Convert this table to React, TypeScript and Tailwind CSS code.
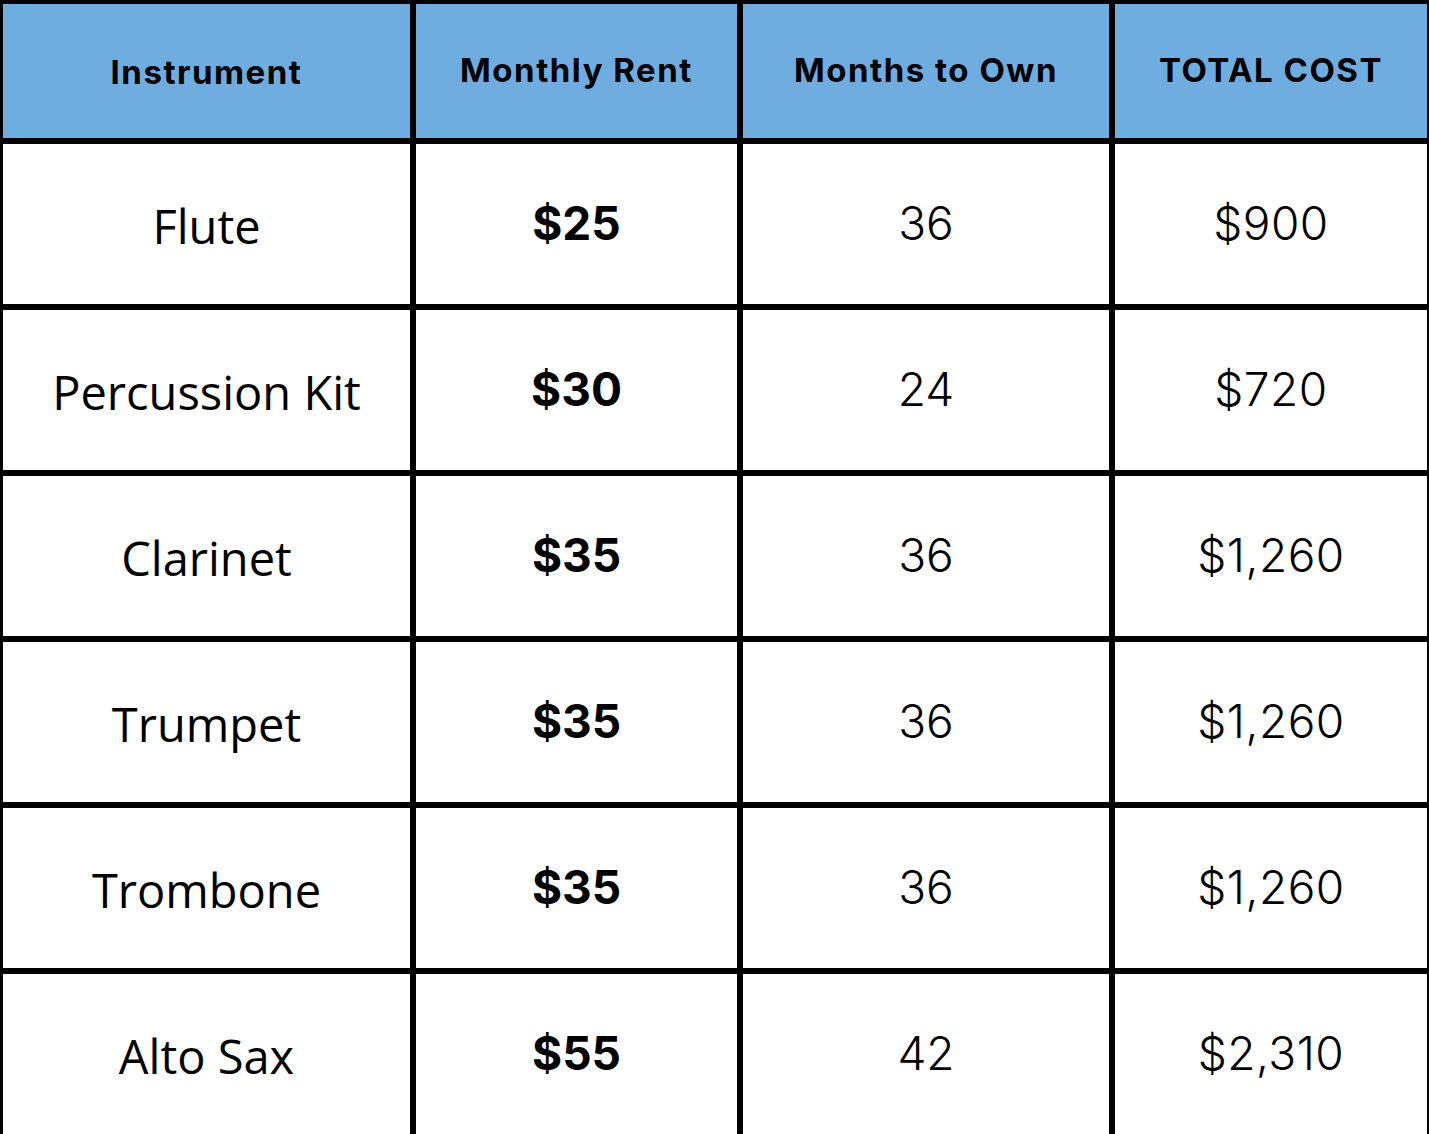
import React from "react";

const rows = [
  ["Flute", "$25", "36", "$900"],
  ["Percussion Kit", "$30", "24", "$720"],
  ["Clarinet", "$35", "36", "$1,260"],
  ["Trumpet", "$35", "36", "$1,260"],
  ["Trombone", "$35", "36", "$1,260"],
  ["Alto Sax", "$55", "42", "$2,310"],
];

const headers = ["Instrument", "Monthly Rent", "Months to Own", "TOTAL COST"];

export default function App() {
  return (
    <div className="w-[1429px] h-[1134px] bg-black overflow-hidden">
      <div className="grid grid-cols-[407px_321px_366px_312px] grid-rows-[134px_160px_160px_160px_160px_160px_160px] gap-[6px] pl-[3px] pr-[2px] pt-[4px]">
        {headers.map((h, i) => (
          <div
            key={h}
            className={`bg-[#6FADE0] flex items-center justify-center text-black font-bold text-[33px] tracking-[1.5px] font-['Inter',sans-serif] ${i === 0 ? "pt-[4px]" : ""}`}
          >
            {h}
          </div>
        ))}
        {rows.map((r) => (
          <React.Fragment key={r[0]}>
            <div className="bg-white flex items-center justify-center text-black text-[47px] pt-[4px] font-['Open_Sans',sans-serif]">
              {r[0]}
            </div>
            <div className="bg-white flex items-center justify-center text-black font-bold text-[46px] pb-[2px] font-['Inter',sans-serif]">
              {r[1]}
            </div>
            <div className="bg-white flex items-center justify-center text-black font-light text-[46px] pb-[2px] font-['Inter',sans-serif]">
              {r[2]}
            </div>
            <div className="bg-white flex items-center justify-center text-black font-light text-[46px] tracking-[0.5px] pb-[2px] font-['Inter',sans-serif]">
              {r[3]}
            </div>
          </React.Fragment>
        ))}
      </div>
    </div>
  );
}
